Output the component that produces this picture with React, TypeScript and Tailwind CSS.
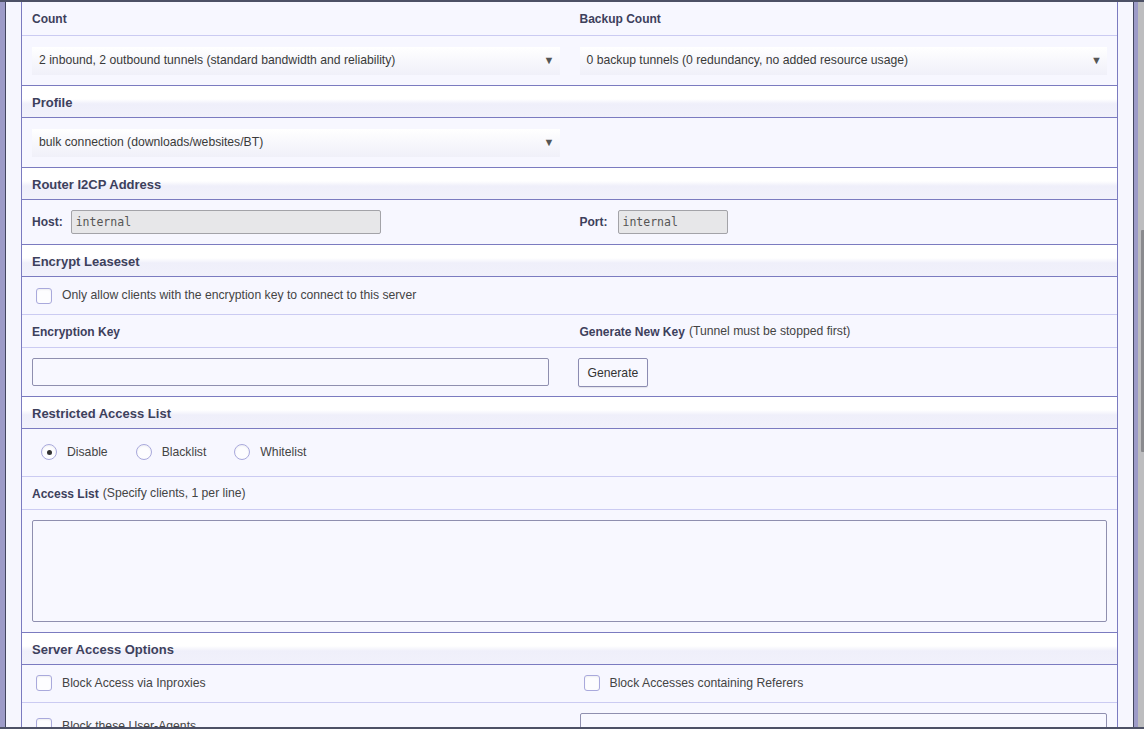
import React from 'react';

const headerCls =
  "h-[32px] border-b border-[#7b7bc0] bg-[linear-gradient(to_bottom,#ffffff_0%,#ffffff_42%,#efeffa_58%,#f1f1fb_100%)] px-[10px] pt-[2px] flex items-center text-[13px] font-bold text-[#3d405c]";

function Header({ children }: { children: React.ReactNode }) {
  return <div className={headerCls}>{children}</div>;
}

function FakeSelect({ value }: { value: string }) {
  return (
    <div className="h-[28px] flex items-center justify-between pl-[7px] pr-[5px] bg-[linear-gradient(to_bottom,#ffffff,#f0f0f9)] text-[12.2px] text-[#3a3a3a]">
      <span>{value}</span>
      <span className="text-[11px] leading-none text-[#555]">▼</span>
    </div>
  );
}

function Checkbox() {
  return (
    <span className="block h-[16px] w-[16px] shrink-0 rounded-[3px] border border-[#a9a9dc] bg-[#fdfdff] shadow-[inset_0_1px_2px_rgba(0,0,0,0.06)]" />
  );
}

function Radio({ checked }: { checked?: boolean }) {
  return (
    <span className="flex h-[16px] w-[16px] shrink-0 items-center justify-center rounded-full border border-[#a9a9dc] bg-[#fdfdff] shadow-[inset_0_1px_2px_rgba(0,0,0,0.06)]">
      {checked && <span className="block h-[5px] w-[5px] rounded-full bg-[#333]" />}
    </span>
  );
}

function Label({ children, note }: { children: React.ReactNode; note?: string }) {
  return (
    <div className="flex h-full items-center px-[10px] pt-[1px] text-[12.2px] text-[#444]">
      <b className="text-[12px] font-bold text-[#3d405c]">{children}</b>
      {note && <span className="ml-[4px]">{note}</span>}
    </div>
  );
}

export default function App() {
  return (
    <div className="flex h-[729px] w-[1144px] overflow-hidden border-y-2 border-[#4d5166] bg-[#9d9bc8] font-['Liberation_Sans',Arial,sans-serif]">
      {/* page panel */}
      <div className="ml-[5px] w-[1129px] shrink-0 overflow-hidden border-x border-[#43465f] bg-[#f6f6fe] px-[15px]">
        <div className="border-x border-[#7b7bc0] bg-[#f7f7ff]">
          {/* Count / Backup count */}
          <div className="grid h-[34px] grid-cols-2 border-b border-[#cbcbf2]">
            <Label>Count</Label>
            <Label>Backup Count</Label>
          </div>
          <div className="grid h-[50px] grid-cols-2 items-center border-b border-[#7b7bc0]">
            <div className="px-[10px]">
              <FakeSelect value="2 inbound, 2 outbound tunnels (standard bandwidth and reliability)" />
            </div>
            <div className="px-[10px]">
              <FakeSelect value="0 backup tunnels (0 redundancy, no added resource usage)" />
            </div>
          </div>

          {/* Profile */}
          <Header>Profile</Header>
          <div className="grid h-[50px] grid-cols-2 items-center border-b border-[#7b7bc0]">
            <div className="px-[10px]">
              <FakeSelect value="bulk connection (downloads/websites/BT)" />
            </div>
            <div />
          </div>

          {/* Router I2CP */}
          <Header>Router I2CP Address</Header>
          <div className="grid h-[45px] grid-cols-2 items-center border-b border-[#7b7bc0] text-[12px]">
            <div className="flex items-center gap-[8px] px-[10px]">
              <b className="font-bold text-[#3d405c]">Host:</b>
              <input
                readOnly
                value="internal"
                className="h-[24px] w-[310px] rounded-[2px] border border-[#a3a3a8] bg-[#e7e7e9] px-[4px] font-['DejaVu_Sans_Mono',monospace] text-[11.5px] text-[#555] outline-none"
              />
            </div>
            <div className="flex items-center gap-[10px] px-[10px]">
              <b className="font-bold text-[#3d405c]">Port:</b>
              <input
                readOnly
                value="internal"
                className="h-[24px] w-[110px] rounded-[2px] border border-[#a3a3a8] bg-[#e7e7e9] px-[4px] font-['DejaVu_Sans_Mono',monospace] text-[11.5px] text-[#555] outline-none"
              />
            </div>
          </div>

          {/* Encrypt leaseset */}
          <Header>Encrypt Leaseset</Header>
          <div className="flex h-[38px] items-center gap-[10px] border-b border-[#cbcbf2] pl-[14px] text-[12.2px] text-[#444]">
            <Checkbox />
            <span>Only allow clients with the encryption key to connect to this server</span>
          </div>
          <div className="grid h-[33px] grid-cols-2 border-b border-[#cbcbf2]">
            <Label>Encryption Key</Label>
            <Label note="(Tunnel must be stopped first)">Generate New Key</Label>
          </div>
          <div className="grid h-[49px] grid-cols-2 items-center border-b border-[#7b7bc0]">
            <div className="px-[10px]">
              <input
                readOnly
                value=""
                className="block h-[28px] w-[517px] rounded-[2px] border border-[#8f8faf] bg-[#f8f8ff] outline-none"
              />
            </div>
            <div className="pl-[8px]">
              <button className="h-[29px] rounded-[2px] border border-[#8c8cb2] bg-[#f8f8ff] px-[9px] pt-[3px] text-[12.2px] text-[#333] shadow-[0_1px_1px_rgba(0,0,0,0.08)]">
                Generate
              </button>
            </div>
          </div>

          {/* Restricted access */}
          <Header>Restricted Access List</Header>
          <div className="flex h-[48px] items-center gap-[28px] border-b border-[#cbcbf2] pl-[19px] text-[12.2px] text-[#444]">
            <label className="flex items-center gap-[10px]">
              <Radio checked />
              <span>Disable</span>
            </label>
            <label className="flex items-center gap-[10px]">
              <Radio />
              <span>Blacklist</span>
            </label>
            <label className="flex items-center gap-[10px]">
              <Radio />
              <span>Whitelist</span>
            </label>
          </div>
          <div className="h-[33px] border-b border-[#cbcbf2]">
            <Label note="(Specify clients, 1 per line)">Access List</Label>
          </div>
          <div className="h-[123px] border-b border-[#7b7bc0] px-[10px] pt-[10px]">
            <textarea
              readOnly
              className="block h-[102px] w-full resize-none rounded-[2px] border border-[#8f8faf] bg-[#f8f8ff] outline-none"
            />
          </div>

          {/* Server access options */}
          <Header>Server Access Options</Header>
          <div className="grid h-[38px] grid-cols-2 items-center border-b border-[#cbcbf2] text-[12.2px] text-[#444]">
            <div className="flex items-center gap-[10px] pl-[14px]">
              <Checkbox />
              <span>Block Access via Inproxies</span>
            </div>
            <div className="flex items-center gap-[10px] pl-[14px]">
              <Checkbox />
              <span>Block Accesses containing Referers</span>
            </div>
          </div>
          <div className="grid h-[48px] grid-cols-2 items-start text-[12.2px] text-[#444]">
            <div className="flex items-center gap-[10px] pl-[14px] pt-[14px]">
              <Checkbox />
              <span>Block these User-Agents</span>
            </div>
            <div className="px-[10px] pt-[10px]">
              <input
                readOnly
                value=""
                className="block h-[28px] w-full rounded-[2px] border border-[#8f8faf] bg-[#f8f8ff] outline-none"
              />
            </div>
          </div>
        </div>
      </div>

      {/* background strip and scrollbar */}
      <div className="w-[4px] shrink-0" />
      <div className="flex w-[6px] shrink-0 flex-col bg-[#bdbdbf]">
        <div className="h-[228px]" />
        <div className="ml-[3px] h-[222px] w-[3px] rounded-l-[1px] bg-[#8a8a8e]" />
      </div>
    </div>
  );
}
